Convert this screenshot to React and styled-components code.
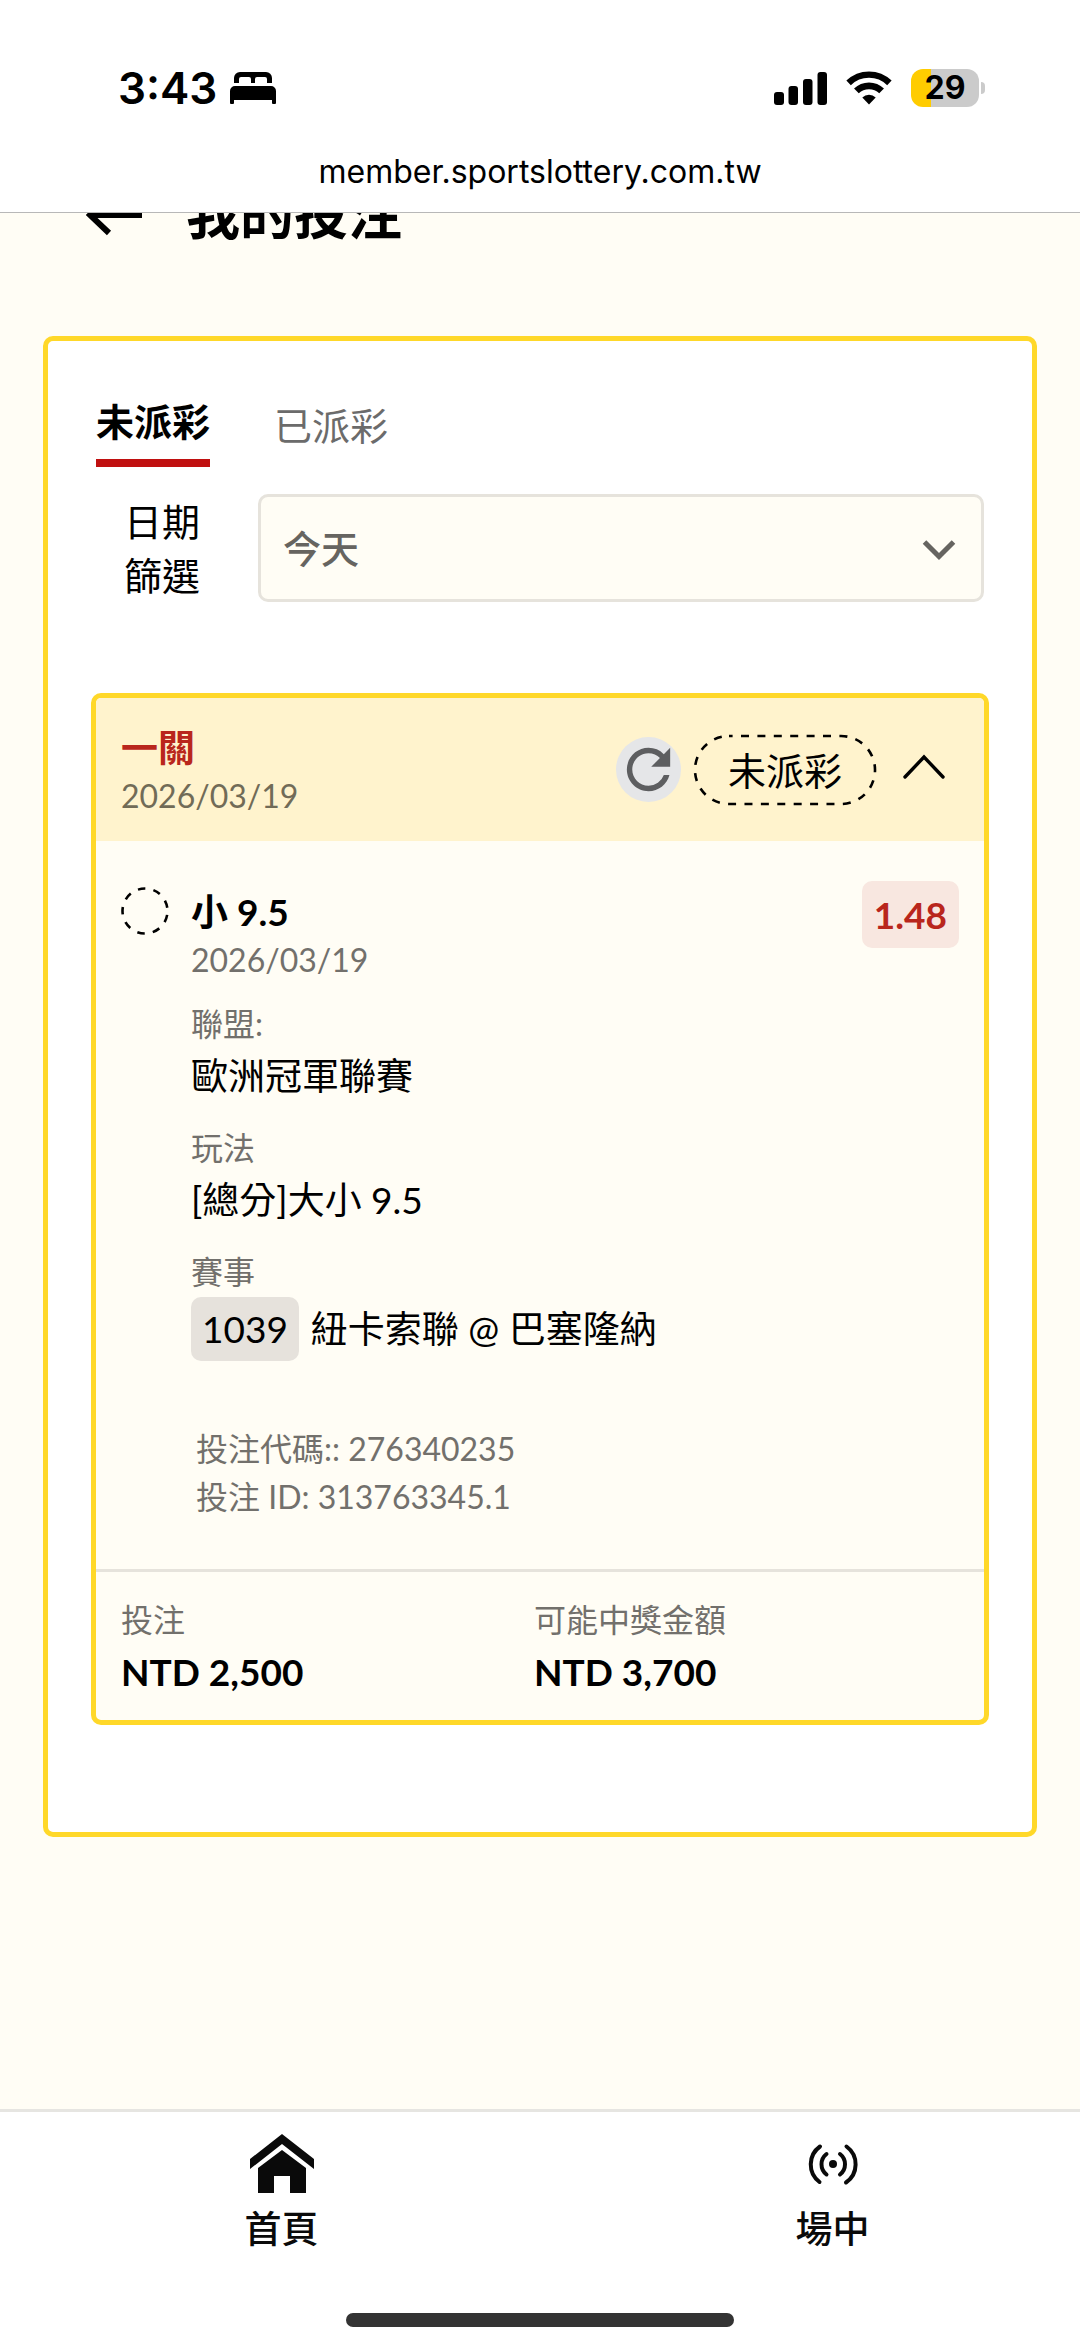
import React, { useState } from 'react';
import styled, { createGlobalStyle } from 'styled-components';

const GlobalStyle = createGlobalStyle`
  * {
    box-sizing: border-box;
  }

  body {
    margin: 0;
    background: #fffdf5;
    color: #000;
    font-family: Lato, 'Noto Sans CJK TC', sans-serif;
    font-size: 38px;
  }

  button, select {
    font: inherit;
    color: inherit;
  }

  svg {
    display: block;
    flex-shrink: 0;
  }
`;

const Page = styled.div`
  display: flex;
  flex-direction: column;
  min-height: 100vh;
`;

/* browser chrome */

const TopBar = styled.header`
  background: #fff;
  border-bottom: 1px solid #b8b8b8;
  padding: 66px 0 20px;
  font-family: Inter, sans-serif;
`;

const StatusBar = styled.div`
  display: flex;
  align-items: center;
  justify-content: space-between;
  height: 44px;
  padding: 0 95px 0 118px;
`;

const StatusGroup = styled.div`
  display: flex;
  align-items: center;
  gap: ${({ $gap }) => $gap}px;
`;

const Time = styled.span`
  font-size: 44px;
  font-weight: 600;
  line-height: 44px;
`;

const Battery = styled.div`
  display: flex;
  align-items: center;
  gap: 2px;
`;

const BatteryBody = styled.span`
  width: 68px;
  border-radius: 12px;
  background: linear-gradient(to right, #ffcc00 20px, #cbcbcb 20px);
  font-size: 32px;
  font-weight: 700;
  line-height: 38px;
  text-align: center;
`;

const BatteryTip = styled.span`
  width: 4px;
  height: 12px;
  border-radius: 0 6px 6px 0;
  background: #cbcbcb;
`;

const Address = styled.div`
  margin-top: 42px;
  font-size: 32px;
  line-height: 40px;
  text-align: center;
`;

/* page content */

const Main = styled.main`
  flex: 1;
  overflow: hidden;
  padding: 0 43px 43px;
`;

/* the page is scrolled, so the title sits half under the top bar */
const TitleRow = styled.div`
  display: flex;
  align-items: center;
  gap: 44px;
  margin: -28px 0 91px;
  padding-left: 43px;
`;

const BackLink = styled.a`
  color: #000;
`;

const Title = styled.h1`
  margin: 0;
  font-size: 54px;
  font-weight: 700;
  line-height: 60px;
`;

const Panel = styled.section`
  border: 5px solid #ffd829;
  border-radius: 10px;
  background: #fff;
  padding: 42px 43px 107px;
`;

const Tabs = styled.div`
  display: flex;
  align-items: center;
  gap: 64px;
  padding: 0 5px;
`;

const Tab = styled.button`
  border: 0;
  border-bottom: ${({ $active }) => ($active ? '8px solid #c01010' : '0')};
  background: none;
  padding: 11px 0;
  line-height: 54px;
  font-weight: ${({ $active }) => ($active ? 700 : 400)};
  color: ${({ $active }) => ($active ? '#000' : '#6b6b6b')};
  cursor: pointer;
`;

const Filter = styled.div`
  display: flex;
  align-items: center;
  margin: 27px 0 91px;
  padding: 0 5px 0 33px;
`;

const FilterLabel = styled.label`
  width: 76px;
  margin-right: 58px;
  line-height: 54px;
`;

const SelectBox = styled.div`
  position: relative;
  flex: 1;
  color: #666460;

  svg {
    position: absolute;
    top: 45px;
    right: 28px;
    pointer-events: none;
  }
`;

const Select = styled.select`
  appearance: none;
  display: block;
  width: 100%;
  height: 108px;
  border: 3px solid #e6e3dc;
  border-radius: 10px;
  background: #fffdf5;
  padding: 0 22px;
  font-weight: 500;
`;

const Card = styled.article`
  border: 5px solid #ffd829;
  border-radius: 10px;
  background: #fffdf5;
`;

const CardHeader = styled.div`
  display: flex;
  align-items: center;
  justify-content: space-between;
  background: #fff3cd;
  border-radius: 5px 5px 0 0;
  padding: 0 25px;
`;

const CardHeading = styled.div`
  padding: 26px 0 21px;
`;

const BetType = styled.h2`
  margin: 0;
  font-size: 37px;
  font-weight: 700;
  line-height: 48px;
  color: #b9261c;
`;

const DateText = styled.div`
  font-size: 32px;
  line-height: 48px;
  color: ${({ $onYellow }) => ($onYellow ? '#716b57' : '#72706c')};
`;

const Actions = styled.div`
  display: flex;
  align-items: center;
  gap: 13px;
`;

const RefreshButton = styled.button`
  display: flex;
  border: 0;
  border-radius: 50%;
  background: #e5e6e8;
  padding: 0;
  color: #5d5e60;
  cursor: pointer;
`;

const ToggleButton = styled.button`
  display: flex;
  align-items: center;
  justify-content: center;
  width: 70px;
  height: 70px;
  border: 0;
  background: none;
  padding: 0 0 6px;
  cursor: pointer;
`;

const StatusPill = styled.span`
  position: relative;
  padding: 8px 34px;
  line-height: 54px;

  svg {
    position: absolute;
    inset: 1px;
    width: calc(100% - 2px);
    height: calc(100% - 2px);
    overflow: visible;
  }
`;

const Selection = styled.div`
  display: flex;
  align-items: flex-start;
  padding: 40px 25px 48px;
`;

const StatusDot = styled.div`
  margin: 6px 22px 0 0;
`;

const Details = styled.div`
  flex: 1;
  padding-top: 7px;
`;

const Pick = styled.h3`
  margin: 0;
  font-size: 37px;
  font-weight: 700;
  line-height: 48px;
`;

const Odds = styled.span`
  border-radius: 10px;
  background: #f8e7e0;
  padding: 0 12px;
  font-size: 37px;
  font-weight: 700;
  line-height: 67px;
  color: #b9261c;
`;

const Facts = styled.dl`
  display: flex;
  flex-direction: column;
  gap: 20px;
  margin: 15px 0 64px;
`;

const Term = styled.dt`
  font-size: 32px;
  line-height: 50px;
  color: #72706c;
`;

const Value = styled.dd`
  display: flex;
  align-items: center;
  gap: 12px;
  margin: 0;
  font-size: 37px;
  line-height: 54px;
  font-weight: ${({ $bold }) => ($bold ? 700 : 400)};
`;

const MatchCode = styled.span`
  border-radius: 10px;
  background: #e6e2dc;
  padding: 5px 11px;
`;

const Codes = styled.div`
  padding-left: 5px;
  font-size: 32px;
  line-height: 48px;
  color: #72706c;
`;

const Totals = styled.dl`
  display: grid;
  grid-template-columns: 1fr 1fr;
  margin: 0;
  border-top: 3px solid #e6e3dc;
  padding: 23px 37px 21px 25px;
`;

/* bottom navigation */

const BottomNav = styled.nav`
  overflow: hidden;
  border-top: 3px solid #e6e5e1;
  background: #fff;
  padding-bottom: 21px;
`;

/* items are a little wider than half the bar, the row runs on to the right */
const NavItems = styled.div`
  display: flex;
  padding-left: 6px;
`;

const NavItem = styled.a`
  display: flex;
  flex: 0 0 calc(50% + 14px);
  flex-direction: column;
  align-items: center;
  gap: 6px;
  padding-top: 20px;
  font-size: 37px;
  font-weight: 500;
  line-height: 54px;
  color: #0a0a0a;
  text-decoration: none;
`;

const HomeIndicator = styled.div`
  width: 36%;
  height: 14px;
  margin: 57px auto 0;
  border-radius: 7px;
  background: #333;
`;

const BedIcon = () => (
  <svg width="46" height="32" viewBox="0 0 46 32">
    <path d="M4 11V6a6 6 0 0 1 6-6h26a6 6 0 0 1 6 6v5h-5V7a2 2 0 0 0-2-2h-8a2 2 0 0 0-2 2v4h-4V7a2 2 0 0 0-2-2h-8a2 2 0 0 0-2 2v4z" />
    <path d="M0 31V19a5 5 0 0 1 5-5h36a5 5 0 0 1 5 5v12a1 1 0 0 1-1 1h-2a1 1 0 0 1-1-1v-3H4v3a1 1 0 0 1-1 1H1a1 1 0 0 1-1-1z" />
  </svg>
);

const SignalIcon = () => (
  <svg width="53" height="34" viewBox="0 0 53 34">
    <rect x="0" y="21" width="10" height="13" rx="3" />
    <rect x="14.5" y="15" width="9.5" height="19" rx="3" />
    <rect x="29" y="8" width="9.5" height="26" rx="3" />
    <rect x="43.5" y="1" width="9.5" height="33" rx="3" />
  </svg>
);

const WifiIcon = () => (
  <svg width="46" height="34" viewBox="0 0 46 34">
    <g fill="none" stroke="#000">
      <path d="M2.6 11.9A29.3 29.3 0 0 1 43.4 11.9" strokeWidth="6.4" />
      <path d="M10.4 19.9A18.2 18.2 0 0 1 35.6 19.9" strokeWidth="6.8" />
    </g>
    <path d="M16.3 26.5A9.7 9.7 0 0 1 29.7 26.5L23 33.5z" />
  </svg>
);

const BackIcon = () => (
  <svg width="56" height="44" viewBox="0 0 56 44" fill="none" stroke="currentColor" strokeWidth="6">
    <path d="M56 22H4M23 2L4 22l19 18" />
  </svg>
);

const ChevronDownIcon = () => (
  <svg width="34" height="22" viewBox="0 0 34 22" fill="none" stroke="currentColor" strokeWidth="5">
    <path d="M2.5 3L17 17.500L31.500 3" />
  </svg>
);

const ChevronUpIcon = () => (
  <svg width="44" height="26" viewBox="0 0 44 26" fill="none" stroke="#000" strokeWidth="3.4" strokeLinecap="round">
    <path d="M3 23L22 3l19 20" />
  </svg>
);

const RefreshIcon = () => (
  <svg width="65" height="65" viewBox="0 0 24 24" fill="currentColor">
    <path d="M17.65 6.35A7.96 7.96 0 0 0 12 4c-4.42 0-7.99 3.58-7.99 8s3.57 8 7.99 8c3.73 0 6.84-2.55 7.73-6h-2.08A5.99 5.99 0 0 1 12 18c-3.31 0-6-2.69-6-6s2.69-6 6-6c1.66 0 3.14.69 4.22 1.78L13 11h7V4l-2.35 2.35z" />
  </svg>
);

const DashedOutline = () => (
  <svg fill="none" stroke="#000" strokeWidth="2.6">
    <rect width="100%" height="100%" rx="34" strokeDasharray="8 8.4" strokeDashoffset="-12" />
  </svg>
);

const DashedCircle = () => (
  <svg width="48" height="48" viewBox="0 0 48 48" fill="none" stroke="#000" strokeWidth="2.6">
    <circle cx="24" cy="24" r="22.5" strokeDasharray="7.5 8.2" strokeDashoffset="-4" />
  </svg>
);

const HomeIcon = () => (
  <svg width="64" height="64" viewBox="0 0 64 64" fill="currentColor">
    <path d="M32 2L64 27V37L32 12L0 37V27z" />
    <path d="M32 18L56 36V61H40V44H24V61H8V36z" />
  </svg>
);

const LiveIcon = () => (
  <svg width="64" height="64" viewBox="0 0 64 64" fill="none" stroke="currentColor" strokeWidth="4" strokeLinecap="round">
    <path d="M19 14.500A22 22 0 0 0 18.500 50M45.500 14.500A22 22 0 0 1 45 50.500" />
    <path d="M25.500 22A13 13 0 0 0 25.500 42.500M39 22A13 13 0 0 1 39 42.500" />
    <circle cx="32" cy="32" r="4" fill="currentColor" stroke="none" />
  </svg>
);

const bet = {
  type: '一關',
  date: '2026/03/19',
  status: '未派彩',
  pick: '小 9.5',
  odds: '1.48',
  league: '歐洲冠軍聯賽',
  market: '[總分]大小 9.5',
  matchCode: '1039',
  match: '紐卡索聯 @ 巴塞隆納',
  code: '276340235',
  id: '313763345.1',
  stake: 'NTD 2,500',
  payout: 'NTD 3,700',
};

const BetCard = ({ bet }) => {
  const [open, setOpen] = useState(true);

  return (
    <Card>
      <CardHeader>
        <CardHeading>
          <BetType>{bet.type}</BetType>
          <DateText $onYellow>{bet.date}</DateText>
        </CardHeading>
        <Actions>
          <RefreshButton type="button" aria-label="重新整理">
            <RefreshIcon />
          </RefreshButton>
          <StatusPill>
            <DashedOutline />
            {bet.status}
          </StatusPill>
          <ToggleButton type="button" aria-label="收合" aria-expanded={open} onClick={() => setOpen(!open)}>
            <ChevronUpIcon />
          </ToggleButton>
        </Actions>
      </CardHeader>

      {open && (
        <Selection>
          <StatusDot>
            <DashedCircle />
          </StatusDot>
          <Details>
            <Pick>{bet.pick}</Pick>
            <DateText>{bet.date}</DateText>
            <Facts>
              <div>
                <Term>聯盟:</Term>
                <Value>{bet.league}</Value>
              </div>
              <div>
                <Term>玩法</Term>
                <Value>{bet.market}</Value>
              </div>
              <div>
                <Term>賽事</Term>
                <Value>
                  <MatchCode>{bet.matchCode}</MatchCode>
                  <span>{bet.match}</span>
                </Value>
              </div>
            </Facts>
            <Codes>
              <div>投注代碼:: {bet.code}</div>
              <div>投注 ID: {bet.id}</div>
            </Codes>
          </Details>
          <Odds>{bet.odds}</Odds>
        </Selection>
      )}

      <Totals>
        <div>
          <Term>投注</Term>
          <Value $bold>{bet.stake}</Value>
        </div>
        <div>
          <Term>可能中獎金額</Term>
          <Value $bold>{bet.payout}</Value>
        </div>
      </Totals>
    </Card>
  );
};

const App = () => {
  const [tab, setTab] = useState('未派彩');

  return (
    <Page>
      <GlobalStyle />
      <TopBar>
        <StatusBar>
          <StatusGroup $gap={13}>
            <Time>3:43</Time>
            <BedIcon />
          </StatusGroup>
          <StatusGroup $gap={19}>
            <SignalIcon />
            <WifiIcon />
            <Battery>
              <BatteryBody>29</BatteryBody>
              <BatteryTip />
            </Battery>
          </StatusGroup>
        </StatusBar>
        <Address>member.sportslottery.com.tw</Address>
      </TopBar>

      <Main>
        <TitleRow>
          <BackLink href="#" aria-label="返回">
            <BackIcon />
          </BackLink>
          <Title>我的投注</Title>
        </TitleRow>

        <Panel>
          <Tabs>
            {['未派彩', '已派彩'].map((name) => (
              <Tab key={name} type="button" $active={tab === name} onClick={() => setTab(name)}>
                {name}
              </Tab>
            ))}
          </Tabs>

          <Filter>
            <FilterLabel htmlFor="date-filter">日期篩選</FilterLabel>
            <SelectBox>
              <Select id="date-filter" defaultValue="today">
                <option value="today">今天</option>
              </Select>
              <ChevronDownIcon />
            </SelectBox>
          </Filter>

          <BetCard bet={bet} />
        </Panel>
      </Main>

      <BottomNav>
        <NavItems>
          <NavItem href="#home">
            <HomeIcon />
            首頁
          </NavItem>
          <NavItem href="#live">
            <LiveIcon />
            場中
          </NavItem>
        </NavItems>
        <HomeIndicator />
      </BottomNav>
    </Page>
  );
};

export default App;
